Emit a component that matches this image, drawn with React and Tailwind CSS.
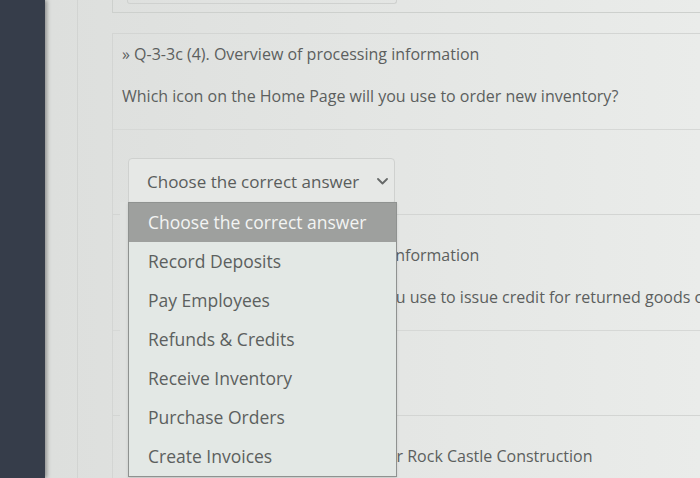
const options = [
  "Choose the correct answer",
  "Record Deposits",
  "Pay Employees",
  "Refunds & Credits",
  "Receive Inventory",
  "Purchase Orders",
  "Create Invoices",
];

const questions = [
  {
    n: 4,
    title: "Overview of processing information",
    text: "Which icon on the Home Page will you use to order new inventory?",
  },
  {
    n: 5,
    title: "Overview of processing information",
    text: "Which icon on the Home Page will you use to issue credit for returned goods or refunds?",
  },
  {
    n: 6,
    title: "Company information for Rock Castle Construction",
    text: "Which icon on the Home Page will you use to enter a new customer?",
  },
];

function Chevron() {
  return (
    <svg width="11" height="7" viewBox="0 0 11 7" fill="none" className="text-[#666968]">
      <polyline points="1,1 5.5,5.5 10,1" stroke="currentColor" strokeWidth="1.8" strokeLinecap="round" strokeLinejoin="round" />
    </svg>
  );
}

function Question({ q, first }) {
  return (
    <div className={"border-b border-[#d3d5d3] pb-[9px] " + (first ? "pt-[8px]" : "pt-[28px]")}>
      <div className="pl-[9px] text-[16px] leading-6 text-[#5c5f5e] whitespace-nowrap">
        » Q-3-3c ({q.n}). {q.title}
      </div>
      <div className="pl-[9px] mt-[18px] text-[16px] leading-6 text-[#5c5f5e] whitespace-nowrap">
        {q.text}
      </div>
      <div className="mt-[21px] border-t border-[#d6d8d6]" />
      <div className="ml-[15px] mt-[28px] h-[47px] w-[267px] rounded-[4px] border border-[#cfd1cf] bg-[#e6e8e6] flex items-center justify-between pl-[18px] pr-[6px]">
        <span className="text-[17px] text-[#5a5d5c]">Choose the correct answer</span>
        <Chevron />
      </div>
    </div>
  );
}

export default function App() {
  return (
    <div
      className="relative w-[700px] h-[478px] overflow-hidden flex bg-gradient-to-r from-[#dcdedc] to-[#eaecea]"
      style={{ fontFamily: '"Open Sans", "Noto Sans", sans-serif' }}
    >
      {/* sidebar */}
      <div className="w-[45px] shrink-0 bg-[#363d4a] shadow-[2px_0_4px_rgba(0,0,0,0.35)]" />

      {/* gutter */}
      <div className="w-[33px] shrink-0 border-r border-[#d2d4d2]" />

      {/* content column */}
      <div className="flex-1 pl-[34px] min-w-0">
        {/* previous card remnant */}
        <div className="h-[13px] border-b border-[#cdd0cd] border-l pl-[14px]">
          <div className="h-[4px] w-[270px] border border-t-0 border-[#cfd1cf] rounded-b-[3px]" />
        </div>

        <div className="mt-[20px] border-t border-l border-[#d3d5d3] w-[700px]">
          {questions.map((q, i) => (
            <Question key={q.n} q={q} first={i === 0} />
          ))}
        </div>
      </div>

      {/* open dropdown list */}
      <div className="absolute left-[120px] top-[202px] pl-[8px] bg-[#e0e2e0]">
        <div className="w-[269px] border border-[#8f9290] bg-[#e3e8e5] shadow-sm">
          {options.map((o, i) => (
            <div
              key={o}
              className={
                "h-[39px] flex items-center pl-[19px] text-[17.5px] whitespace-nowrap " +
                (i === 0 ? "bg-[#9ea09e] text-[#f3f4f3]" : "text-[#5c605e]")
              }
            >
              {o}
            </div>
          ))}
        </div>
      </div>
    </div>
  );
}
